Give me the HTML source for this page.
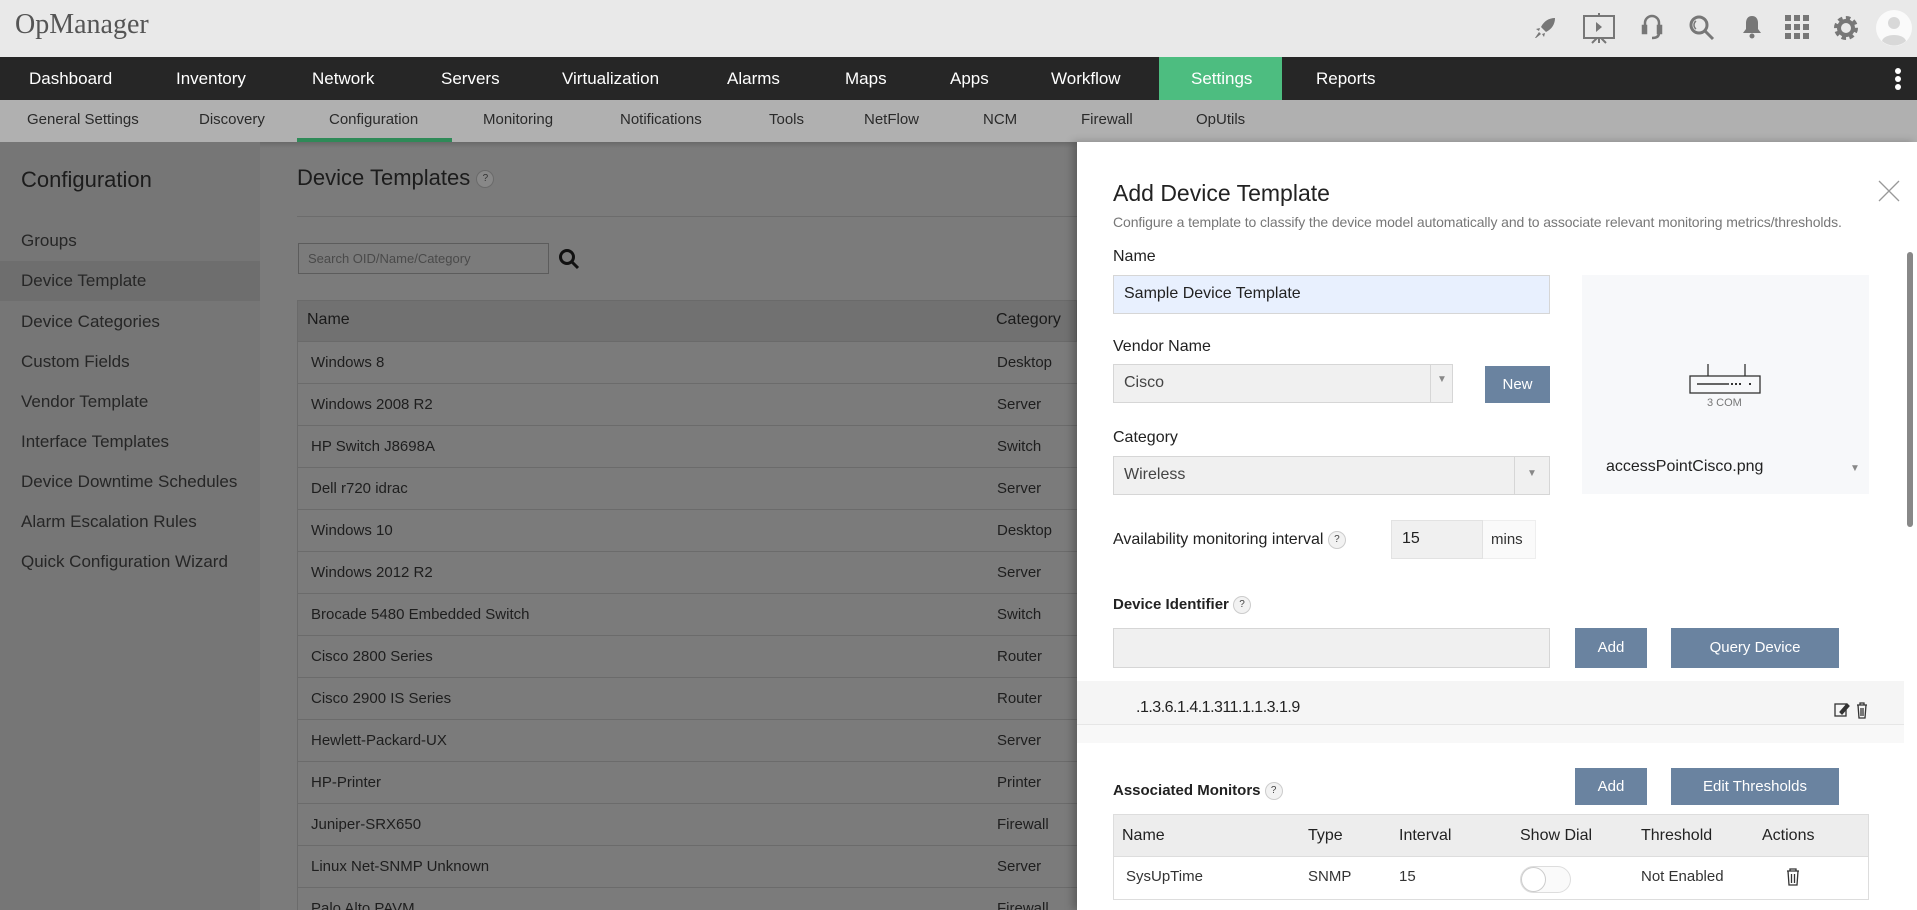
<!DOCTYPE html>
<html style="width:1917px;height:910px;overflow:hidden"><head><meta charset="utf-8"><style>
*{box-sizing:border-box;margin:0;padding:0}
body{width:1917px;height:910px;overflow:hidden;font-family:"Liberation Sans",sans-serif;background:#7b7b7b;color:#222}
#w{position:relative;width:1917px;height:910px;overflow:hidden}
.a{position:absolute;white-space:nowrap}
.hdr{left:0;top:0;width:1917px;height:57px;background:#e9e9e9}
.nav{left:0;top:57px;width:1917px;height:43px;background:#262626}
.nav span{position:absolute;top:12px;color:#fff;font-size:17px}
.sub{left:0;top:100px;width:1917px;height:42px;background:#b0b0b0}
.sub span{position:absolute;top:11px;color:#2a2a2a;font-size:15px}
.side{left:0;top:142px;width:260px;height:768px;background:#767676}
.si{position:absolute;left:21px;font-size:17px;color:#262626}
.row{position:absolute;left:297px;width:780px;height:42px;border-bottom:1px solid #6b6b6b;border-left:1px solid #6b6b6b;font-size:15px;color:#1e1e1e}
.row b{font-weight:normal;position:absolute;left:13px;top:12px}
.row i{font-style:normal;position:absolute;left:699px;top:12px}
.panel{left:1077px;top:142px;width:840px;height:768px;background:#fff;box-shadow:-4px 0 8px rgba(0,0,0,.25)}
.lbl{font-size:16px;color:#222}
.inp{border:1px solid #d6d6d6;background:#f0f0f0}
.btn{background:#6a83a0;color:#fff;font-size:15px;text-align:center}
.q{display:inline-block;width:18px;height:18px;border-radius:50%;border:1px solid #ccc;background:#f2f2f2;font-size:10px;text-align:center;line-height:16px;color:#444;vertical-align:middle}
.ic{position:absolute;top:15px}
</style></head><body><div id="w">
<div class="a hdr"></div>
<div class="a" style="left:15px;top:9px;font-family:'Liberation Serif',serif;font-size:28px;color:#555">OpManager</div>
<svg class="ic" style="left:1533px" width="24" height="26" viewBox="0 0 24 24" fill="#777"><path d="M22 2c-6 0-11 3-14 9l5 5c6-3 9-8 9-14zM7 12l-4 1 3 2zM12 17l-1 4 -2-3zM6 16l-4 6 1 0 5-4z"/></svg>
<svg class="ic" style="left:1582px;top:12px" width="34" height="32" viewBox="0 0 34 32" fill="none" stroke="#777" stroke-width="2"><rect x="2" y="4" width="30" height="22"/><path d="M17 1v3M17 26v5M10 31l5-5M24 31l-5-5"/><path d="M14 10l6 5-6 5z" fill="#777" stroke="none"/></svg>
<svg class="ic" style="left:1641px;top:14px" width="22" height="28" viewBox="0 0 22 28" fill="none" stroke="#777" stroke-width="2.5"><path d="M4 14V9a7 7 0 0 1 14 0v5"/><rect x="2" y="12" width="3" height="7" fill="#777"/><rect x="17" y="12" width="3" height="7" fill="#777"/><path d="M18 19c0 4-3 5-7 5"/></svg>
<svg class="ic" style="left:1688px;top:14px" width="28" height="28" viewBox="0 0 28 28" fill="none" stroke="#777" stroke-width="3"><circle cx="11" cy="11" r="8"/><path d="M17 17l8 8"/><path d="M8 7a5 5 0 0 0 0 8" stroke-width="1.5"/></svg>
<svg class="ic" style="left:1741px;top:14px" width="22" height="26" viewBox="0 0 22 26" fill="#777"><path d="M11 2c-4 0-6 3-6 7v6l-3 4h18l-3-4V9c0-4-2-7-6-7z"/><circle cx="11" cy="22" r="2.5"/></svg>
<svg class="ic" style="left:1785px;top:15px" width="25" height="25" viewBox="0 0 25 25" fill="#777"><rect x="0" y="0" width="6" height="6"/><rect x="9" y="0" width="6" height="6"/><rect x="18" y="0" width="6" height="6"/><rect x="0" y="9" width="6" height="6"/><rect x="9" y="9" width="6" height="6"/><rect x="18" y="9" width="6" height="6"/><rect x="0" y="18" width="6" height="6"/><rect x="9" y="18" width="6" height="6"/><rect x="18" y="18" width="6" height="6"/></svg>
<svg class="ic" style="left:1832px;top:14px" width="28" height="28" viewBox="0 0 28 28"><circle cx="14" cy="14" r="9" fill="none" stroke="#777" stroke-width="6" stroke-dasharray="4 3"/><circle cx="14" cy="14" r="7" fill="none" stroke="#777" stroke-width="4"/></svg>
<svg class="ic" style="left:1876px;top:10px" width="36" height="36" viewBox="0 0 36 36"><circle cx="18" cy="18" r="18" fill="#fafafa"/><circle cx="18" cy="13" r="6" fill="#d8d8d8"/><path d="M6 31c2-8 22-8 24 0a18 18 0 0 1-24 0z" fill="#d8d8d8"/></svg>

<div class="a nav">
<span style="left:29px">Dashboard</span><span style="left:176px">Inventory</span><span style="left:312px">Network</span><span style="left:441px">Servers</span><span style="left:562px">Virtualization</span><span style="left:727px">Alarms</span><span style="left:845px">Maps</span><span style="left:950px">Apps</span><span style="left:1051px">Workflow</span>
<div style="position:absolute;left:1159px;top:0;width:123px;height:43px;background:#4dbd80"></div>
<span style="left:1191px">Settings</span><span style="left:1316px">Reports</span>
<div style="position:absolute;left:1895px;top:11px;width:6px;height:6px;border-radius:50%;background:#fff"></div>
<div style="position:absolute;left:1895px;top:19px;width:6px;height:6px;border-radius:50%;background:#fff"></div>
<div style="position:absolute;left:1895px;top:27px;width:6px;height:6px;border-radius:50%;background:#fff"></div>
</div>
<div class="a sub">
<span style="left:27px">General Settings</span><span style="left:199px">Discovery</span><span style="left:329px">Configuration</span><span style="left:483px">Monitoring</span><span style="left:620px">Notifications</span><span style="left:769px">Tools</span><span style="left:864px">NetFlow</span><span style="left:983px">NCM</span><span style="left:1081px">Firewall</span><span style="left:1196px">OpUtils</span>
<div style="position:absolute;left:297px;top:38px;width:155px;height:4px;background:#2f8a58"></div>
</div>
<div class="a" style="left:0;top:142px;width:1077px;height:6px;background:linear-gradient(#6a6a6a,#7b7b7b)"></div>

<div class="a side"></div>
<div class="a" style="left:21px;top:167px;font-size:22px;color:#1c1c1c">Configuration</div>
<div class="a" style="left:0;top:261px;width:260px;height:40px;background:#6e6e6e"></div>
<div class="si a" style="top:231px">Groups</div>
<div class="si a" style="top:271px">Device Template</div>
<div class="si a" style="top:312px">Device Categories</div>
<div class="si a" style="top:352px">Custom Fields</div>
<div class="si a" style="top:392px">Vendor Template</div>
<div class="si a" style="top:432px">Interface Templates</div>
<div class="si a" style="top:472px">Device Downtime Schedules</div>
<div class="si a" style="top:512px">Alarm Escalation Rules</div>
<div class="si a" style="top:552px">Quick Configuration Wizard</div>

<div class="a" style="left:297px;top:165px;font-size:22px;color:#1c1c1c">Device Templates <span class="q" style="background:#888;border-color:#6a6a6a;color:#333">?</span></div>
<div class="a" style="left:297px;top:216px;width:780px;height:1px;background:#6c6c6c"></div>
<div class="a" style="left:298px;top:243px;width:251px;height:31px;border:1px solid #5c5c5c;font-size:13px;color:#4a4a4a;padding:7px 9px">Search OID/Name/Category</div>
<svg class="a" style="left:558px;top:248px" width="22" height="22" viewBox="0 0 22 22" fill="none" stroke="#111" stroke-width="3"><circle cx="9" cy="9" r="6.5"/><path d="M14 14l6 6"/></svg>
<div class="a" style="left:297px;top:300px;width:780px;height:42px;background:#717171;border:1px solid #6a6a6a"></div>
<div class="a" style="left:307px;top:311px;font-size:16px;color:#1a1a1a">Name</div>
<div class="a" style="left:996px;top:311px;font-size:16px;color:#1a1a1a">Category</div>
<div class="row" style="top:342px"><b>Windows 8</b><i>Desktop</i></div>
<div class="row" style="top:384px"><b>Windows 2008 R2</b><i>Server</i></div>
<div class="row" style="top:426px"><b>HP Switch J8698A</b><i>Switch</i></div>
<div class="row" style="top:468px"><b>Dell r720 idrac</b><i>Server</i></div>
<div class="row" style="top:510px"><b>Windows 10</b><i>Desktop</i></div>
<div class="row" style="top:552px"><b>Windows 2012 R2</b><i>Server</i></div>
<div class="row" style="top:594px"><b>Brocade 5480 Embedded Switch</b><i>Switch</i></div>
<div class="row" style="top:636px"><b>Cisco 2800 Series</b><i>Router</i></div>
<div class="row" style="top:678px"><b>Cisco 2900 IS Series</b><i>Router</i></div>
<div class="row" style="top:720px"><b>Hewlett-Packard-UX</b><i>Server</i></div>
<div class="row" style="top:762px"><b>HP-Printer</b><i>Printer</i></div>
<div class="row" style="top:804px"><b>Juniper-SRX650</b><i>Firewall</i></div>
<div class="row" style="top:846px"><b>Linux Net-SNMP Unknown</b><i>Server</i></div>
<div class="row" style="top:888px;height:22px;border-bottom:none;overflow:hidden"><b>Palo Alto PAVM</b><i>Firewall</i></div>

<div class="a panel"></div>
<svg class="a" style="left:1878px;top:180px" width="22" height="22" viewBox="0 0 22 22" stroke="#999" stroke-width="1.3"><path d="M1 1l20 20M21 1L1 21"/></svg>
<div class="a" style="left:1113px;top:180px;font-size:23px;color:#222">Add Device Template</div>
<div class="a" style="left:1113px;top:214px;font-size:14px;color:#777;letter-spacing:-0.1px">Configure a template to classify the device model automatically and to associate relevant monitoring metrics/thresholds.</div>
<div class="a" style="left:1907px;top:252px;width:6px;height:275px;border-radius:3px;background:#888"></div>

<div class="a lbl" style="left:1113px;top:248px">Name</div>
<div class="a" style="left:1113px;top:275px;width:437px;height:39px;background:#e8f0fe;border:1px solid #d6d6d6;font-size:16px;padding:9px 10px;color:#222">Sample Device Template</div>
<div class="a lbl" style="left:1113px;top:338px">Vendor Name</div>
<div class="a inp" style="left:1113px;top:364px;width:340px;height:39px;font-size:16px;padding:9px 10px;color:#444">Cisco</div>
<div class="a" style="left:1430px;top:365px;width:1px;height:37px;background:#d6d6d6"></div>
<div class="a" style="left:1437px;top:374px;font-size:10px;color:#888">▼</div>
<div class="a btn" style="left:1485px;top:366px;width:65px;height:37px;line-height:37px">New</div>
<div class="a lbl" style="left:1113px;top:429px">Category</div>
<div class="a inp" style="left:1113px;top:456px;width:437px;height:39px;font-size:16px;padding:9px 10px;color:#444">Wireless</div>
<div class="a" style="left:1514px;top:457px;width:1px;height:37px;background:#d6d6d6"></div>
<div class="a" style="left:1527px;top:468px;font-size:10px;color:#888">▼</div>

<div class="a" style="left:1582px;top:275px;width:287px;height:219px;background:#f7f8fa"></div>
<svg class="a" style="left:1688px;top:362px" width="74" height="34" viewBox="0 0 74 34" fill="none" stroke="#333" stroke-width="1.3"><path d="M20 2v12M57 2v12"/><rect x="2" y="14" width="70" height="17"/><path d="M9 22h32" stroke-width="1.5"/><path d="M43 22h2M47 22h2M51 22h2M62 21v2" stroke-width="2"/></svg>
<div class="a" style="left:1707px;top:397px;font-size:11px;color:#777">3 COM</div>
<div class="a" style="left:1606px;top:458px;font-size:16px;color:#222">accessPointCisco.png</div>
<div class="a" style="left:1850px;top:463px;font-size:10px;color:#888">▼</div>

<div class="a lbl" style="left:1113px;top:531px">Availability monitoring interval <span class="q">?</span></div>
<div class="a" style="left:1391px;top:520px;width:92px;height:39px;background:#f0f0f0;border:1px solid #e2e2e2;font-size:16px;padding:9px 10px">15</div>
<div class="a" style="left:1483px;top:520px;width:53px;height:39px;background:#fafafa;border:1px solid #eee;border-left:none;font-size:15px;padding:10px 8px;color:#333">mins</div>

<div class="a lbl" style="left:1113px;top:596px;font-weight:bold;font-size:15px">Device Identifier <span class="q" style="font-weight:normal">?</span></div>
<div class="a inp" style="left:1113px;top:628px;width:437px;height:40px"></div>
<div class="a btn" style="left:1575px;top:628px;width:72px;height:40px;line-height:40px">Add</div>
<div class="a btn" style="left:1671px;top:628px;width:168px;height:40px;line-height:40px">Query Device</div>
<div class="a" style="left:1077px;top:681px;width:827px;height:44px;background:#f5f5f5;border-bottom:1px solid #e6e6e6"></div>
<div class="a" style="left:1077px;top:725px;width:827px;height:18px;background:#f8f8f8"></div>
<div class="a" style="left:1136px;top:699px;font-size:16px;color:#222;letter-spacing:-0.5px">.1.3.6.1.4.1.311.1.1.3.1.9</div>
<svg class="a" style="left:1834px;top:701px" width="36" height="18" viewBox="0 0 36 18" fill="none" stroke="#333" stroke-width="1.3"><rect x="1" y="3" width="11" height="12"/><path d="M6 11l7-8 2 2-7 8z" fill="#333"/><path d="M23 4h10M26 4V2h4v2M24 4l1 13h6l1-13M27 7v8M29 7v8"/></svg>

<div class="a lbl" style="left:1113px;top:782px;font-weight:bold;font-size:15px">Associated Monitors <span class="q" style="font-weight:normal">?</span></div>
<div class="a btn" style="left:1575px;top:768px;width:72px;height:37px;line-height:37px">Add</div>
<div class="a btn" style="left:1671px;top:768px;width:168px;height:37px;line-height:37px">Edit Thresholds</div>
<div class="a" style="left:1113px;top:814px;width:756px;height:86px;border:1px solid #ddd"></div>
<div class="a" style="left:1114px;top:815px;width:754px;height:42px;background:#ededed;border-bottom:1px solid #ddd"></div>
<div class="a lbl" style="left:1122px;top:827px">Name</div>
<div class="a lbl" style="left:1308px;top:827px">Type</div>
<div class="a lbl" style="left:1399px;top:827px">Interval</div>
<div class="a lbl" style="left:1520px;top:827px">Show Dial</div>
<div class="a lbl" style="left:1641px;top:827px">Threshold</div>
<div class="a lbl" style="left:1762px;top:827px">Actions</div>
<div class="a" style="left:1126px;top:868px;font-size:15px;color:#333">SysUpTime</div>
<div class="a" style="left:1308px;top:868px;font-size:15px;color:#333">SNMP</div>
<div class="a" style="left:1399px;top:868px;font-size:15px;color:#333">15</div>
<div class="a" style="left:1520px;top:866px;width:51px;height:27px;border:1px solid #ddd;border-radius:14px;background:#fafafa"></div>
<div class="a" style="left:1521px;top:867px;width:25px;height:25px;border:1px solid #ccc;border-radius:50%;background:#fff"></div>
<div class="a" style="left:1641px;top:868px;font-size:15px;color:#333">Not Enabled</div>
<svg class="a" style="left:1786px;top:867px" width="14" height="20" viewBox="0 0 14 20" fill="none" stroke="#333" stroke-width="1.3"><path d="M1 4h12M4 4V2h6v2M2 4l1 14h8l1-14M5.5 7v9M8.5 7v9"/></svg>
</div></body></html>
